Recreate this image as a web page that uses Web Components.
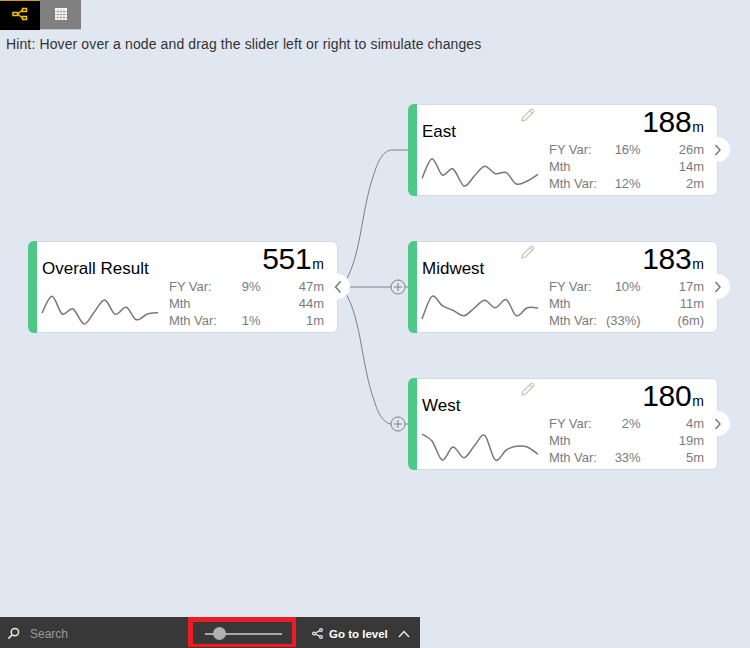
<!DOCTYPE html>
<html>
<head>
<meta charset="utf-8">
<title>Value driver tree</title>
<style>
  html, body { margin: 0; height: 100%; }
  body { background: #e1e7f0; font-family: "Liberation Sans", Arial, sans-serif; overflow: hidden; }
  #page { display: flex; flex-direction: column; height: 648px; }
</style>
</head>
<body>
<div id="page">
  <view-toggle></view-toggle>
  <hint-line>Hint: Hover over a node and drag the slider left or right to simulate changes</hint-line>
  <node-tree>
    <kpi-node slot="root" name="Overall Result" value="551" tab="left"
      points="22,5.3,23,18,33,21,9,23.3,16.3,28.7,23,21.7">
      <kpi-row label="FY Var:" pct="9%" val="47m"></kpi-row>
      <kpi-row label="Mth" val="44m"></kpi-row>
      <kpi-row label="Mth Var:" pct="1%" val="1m"></kpi-row>
    </kpi-node>
    <kpi-node name="East" value="188" tab="right" pencil
      points="24.3,4.7,21,15,32,22,12.3,19.7,18.7,30,27,20.3">
      <kpi-row label="FY Var:" pct="16%" val="26m"></kpi-row>
      <kpi-row label="Mth" val="14m"></kpi-row>
      <kpi-row label="Mth Var:" pct="12%" val="2m"></kpi-row>
    </kpi-node>
    <kpi-node name="Midwest" value="183" tab="right" pencil
      points="28,5.3,14.7,19.3,24.7,17,9.3,16.7,8.7,24.7,16.7,17">
      <kpi-row label="FY Var:" pct="10%" val="17m"></kpi-row>
      <kpi-row label="Mth" val="11m"></kpi-row>
      <kpi-row label="Mth Var:" pct="(33%)" val="(6m)"></kpi-row>
    </kpi-node>
    <kpi-node name="West" value="180" tab="right" pencil
      points="6,13,32,19,29.7,18,7.3,32,22,18.3,19,26.3">
      <kpi-row label="FY Var:" pct="2%" val="4m"></kpi-row>
      <kpi-row label="Mth" val="19m"></kpi-row>
      <kpi-row label="Mth Var:" pct="33%" val="5m"></kpi-row>
    </kpi-node>
  </node-tree>
  <bottom-bar></bottom-bar>
</div>

<script>
  class ViewToggle extends HTMLElement {
    constructor() {
      super();
      this.attachShadow({ mode: "open" });
    }
    connectedCallback() {
      this.shadowRoot.innerHTML = `
        <style>
          :host { display: flex; width: 81px; height: 30px; flex: none; }
          .tree { width: 40px; background: #000; border-top: 1px solid #c9a000; box-sizing: border-box; padding-bottom: 3px;
            display: flex; align-items: center; justify-content: center; }
          .grid { width: 41px; background: #808080; border-bottom: 1px solid #c3c8cf; box-sizing: border-box; padding-bottom: 2px;
            display: flex; align-items: center; justify-content: center; }
        </style>
        <div class="tree">
          <svg width="16" height="14" viewBox="0 0 16 14" fill="none" stroke="#f2c200" stroke-width="1.5">
            <rect x="1" y="5.5" width="4.5" height="3"/>
            <rect x="10.5" y="1.5" width="4" height="3"/>
            <rect x="10.5" y="9.5" width="4" height="3"/>
            <path d="M5.5 7 L10.5 3 M5.5 7 L10.5 11"/>
          </svg>
        </div>
        <div class="grid">
          <svg width="12" height="12" viewBox="0 0 12 12">
            <rect width="12" height="12" fill="#fff"/>
            <path d="M0 3.5H12M0 6.5H12M0 9.5H12M3 1V12M6 1V12M9 1V12" stroke="#b4b4b4" stroke-width="1"/>
          </svg>
        </div>`;
    }
  }

  class HintLine extends HTMLElement {
    constructor() {
      super();
      this.attachShadow({ mode: "open" });
    }
    connectedCallback() {
      this.shadowRoot.innerHTML = `
        <style>
          :host { display: block; flex: none; height: 74px; padding: 6px 0 0 6px; box-sizing: border-box;
            font-size: 14px; line-height: 16px; color: #333; letter-spacing: .12px; }
        </style>
        <slot></slot>`;
    }
  }

  class SparkLine extends HTMLElement {
    constructor() {
      super();
      this.attachShadow({ mode: "open" });
    }
    connectedCallback() {
      const xs = [0, 10, 20.3, 31, 42, 52.3, 62.7, 73.3, 84.3, 94.3, 105.3, 116];
      const ys = this.getAttribute("points").split(",").map(Number);
      const pts = ys.map((y, i) => [xs[i], y]);
      // catmull-rom through the samples
      let d = `M${pts[0][0]} ${pts[0][1]}`;
      for (let i = 0; i < pts.length - 1; i++) {
        const p0 = pts[i - 1] || pts[i];
        const p1 = pts[i];
        const p2 = pts[i + 1];
        const p3 = pts[i + 2] || p2;
        const c1x = p1[0] + (p2[0] - p0[0]) / 6;
        const c1y = p1[1] + (p2[1] - p0[1]) / 6;
        const c2x = p2[0] - (p3[0] - p1[0]) / 6;
        const c2y = p2[1] - (p3[1] - p1[1]) / 6;
        d += ` C${c1x.toFixed(1)} ${c1y.toFixed(1)} ${c2x.toFixed(1)} ${c2y.toFixed(1)} ${p2[0]} ${p2[1]}`;
      }
      this.shadowRoot.innerHTML = `
        <style>
          :host { display: block; width: 116px; height: 36px; flex: none; margin-top: 12px; }
          svg { display: block; overflow: visible; }
        </style>
        <svg width="116" height="36" viewBox="0 0 116 36">
          <path d="${d}" fill="none" stroke="#777" stroke-width="1.5"/>
        </svg>`;
    }
  }

  class KpiRow extends HTMLElement {
    constructor() {
      super();
      this.attachShadow({ mode: "open" });
    }
    connectedCallback() {
      const label = this.getAttribute("label") || "";
      const pct = this.getAttribute("pct") || "";
      const val = this.getAttribute("val") || "";
      this.shadowRoot.innerHTML = `
        <style>
          :host { display: grid; grid-template-columns: 50px 41.5px 63.5px; height: 17px;
            font-size: 13px; line-height: 17px; color: #7b7b7b; white-space: nowrap; letter-spacing: -.05px; }
          .n { text-align: right; }
        </style>
        <span>${label}</span><span class="n">${pct}</span><span class="n">${val}</span>`;
    }
  }

  class KpiNode extends HTMLElement {
    constructor() {
      super();
      this.attachShadow({ mode: "open" });
    }
    connectedCallback() {
      const name = this.getAttribute("name");
      const value = this.getAttribute("value");
      const tab = this.getAttribute("tab");
      const chevron = tab === "left" ? "M8.5 1.5 L3.5 7 L8.5 12.5" : "M3.5 2 L8 7 L3.5 12";
      const pencil = this.hasAttribute("pencil") ? `
        <svg class="pencil" width="14" height="14" viewBox="0 0 14 14" fill="#fff" stroke="#c8c8c0" stroke-width="1.3">
          <path d="M1 13 L1.8 9.6 L9.8 1.6 Q10.6 .9 11.4 1.6 L12.4 2.6 Q13.1 3.4 12.4 4.2 L4.4 12.2 Z"/>
          <path d="M8.6 2.8 L11.2 5.4" fill="none"/>
        </svg>` : "";
      this.shadowRoot.innerHTML = `
        <style>
          :host { display: flex; position: relative; width: 310px; height: 92px; box-sizing: border-box;
            background: #fff; border-radius: 6px; border: 1px solid #d5dae3; border-left: 0; }
          .bar { width: 9px; flex: none; margin: -1px 0; background: #4dc886; border-radius: 6px 0 0 6px; }
          .body { flex: 1; display: flex; flex-direction: column; padding: 0 13px 0 5px; color: #000; }
          .head { display: flex; justify-content: space-between; height: 37px; flex: none; }
          .name { font-size: 17px; line-height: 20px; margin-top: 17px; }
          .num { display: flex; align-items: baseline; margin-top: 0; line-height: 34px; height: 34px; }
          .num b { font-weight: normal; font-size: 30px; letter-spacing: -.3px; }
          .num i { font-style: normal; font-size: 14px; margin-left: 1px; }
          .low { display: flex; justify-content: space-between; }
          .rows { width: 155px; margin-top: -1px; }
          .pencil { position: absolute; left: 113px; top: 3px; }
          .tab { position: absolute; right: -13px; top: 32px; width: 25px; height: 25px; border-radius: 50%;
            background: #fff; display: flex; align-items: center; justify-content: center; }
        </style>
        <div class="bar"></div>
        <div class="body">
          <div class="head">
            <div class="name">${name}</div>
            <div class="num"><b>${value}</b><i>m</i></div>
          </div>
          <div class="low">
            <spark-line points="${this.getAttribute("points")}"></spark-line>
            <div class="rows"><slot></slot></div>
          </div>
        </div>
        ${pencil}
        <div class="tab">
          <svg width="12" height="14" viewBox="0 0 12 14" fill="none" stroke="#757575" stroke-width="1.4"><path d="${chevron}"/></svg>
        </div>`;
    }
  }

  class NodeTree extends HTMLElement {
    constructor() {
      super();
      this.attachShadow({ mode: "open" });
    }
    connectedCallback() {
      const plus = (x, y) => `
        <circle cx="${x}" cy="${y}" r="7" fill="#e1e7f0" stroke="#808080"/>
        <path d="M${x - 4} ${y}H${x + 4}M${x} ${y - 4}V${y + 4}" stroke="#808080"/>`;
      this.shadowRoot.innerHTML = `
        <style>
          :host { display: flex; flex: 1; position: relative; align-items: flex-start; padding-left: 28px; gap: 70px; }
          .root { margin-top: 137px; }
          .kids { display: flex; flex-direction: column; gap: 45px; }
          svg.links { position: absolute; left: 0; top: 0; }
          .root, .kids { position: relative; z-index: 1; }
        </style>
        <svg class="links" width="750" height="440" viewBox="0 104 750 440" fill="none" stroke="#808080">
          <path d="M346 280 C352 270 356 256 360 236 C364 214 368 190 374 174 C378 160 384 150 392 150 L408 150"/>
          <path d="M346 294 C352 304 356 318 360 338 C364 360 368 384 374 400 C378 414 384 424 392 424 L408 424"/>
          <path d="M350 287 H408"/>
          ${plus(398, 287)}
          ${plus(398, 424)}
        </svg>
        <div class="root"><slot name="root"></slot></div>
        <div class="kids"><slot></slot></div>`;
    }
  }

  class BottomBar extends HTMLElement {
    constructor() {
      super();
      this.attachShadow({ mode: "open" });
    }
    connectedCallback() {
      this.shadowRoot.innerHTML = `
        <style>
          :host { display: flex; align-items: center; width: 420px; height: 31px; flex: none; box-sizing: border-box;
            background: #383838; color: #fff; font-size: 12px; padding: 2px 0 0 7px; }
          .find { display: flex; align-items: center; gap: 10px; width: 181px; color: #9a9a9a; }
          .find svg, .level svg { display: block; }
          .slider { box-sizing: border-box; width: 108px; height: 30px; align-self: flex-start; margin-top: -2px;
            border: solid #ed1c24; border-width: 5px 4px 3px 5px; display: flex; align-items: center;
            padding: 2px 0 0 12px; }
          .track { position: relative; width: 77px; height: 2px; background: #a8a8a8; }
          .thumb { position: absolute; left: 8px; top: -6px; width: 13px; height: 13px; border-radius: 50%; background: #b0b0b0; }
          .level { display: flex; align-items: center; margin-left: 16px; font-weight: bold; font-size: 11.5px; }
          .level span { margin: 0 10px 0 6px; }
        </style>
        <div class="find">
          <svg width="13" height="13" viewBox="0 0 14 14" fill="none" stroke="#e8e8e8" stroke-width="1.6">
            <circle cx="8.5" cy="5.5" r="4"/><path d="M5.5 8.5 L1.5 12.5"/>
          </svg>
          <span>Search</span>
        </div>
        <div class="slider"><div class="track"><div class="thumb"></div></div></div>
        <div class="level">
          <svg width="11" height="11" viewBox="0 0 11 11" fill="none" stroke="#e8e8e8" stroke-width="1.2">
            <circle cx="2" cy="5.5" r="1.4"/><circle cx="9" cy="2" r="1.4"/><circle cx="9" cy="9" r="1.4"/>
            <path d="M3.4 5 L7.8 2.6 M3.4 6 L7.8 8.4"/>
          </svg>
          <span>Go to level</span>
          <svg width="12" height="8" viewBox="0 0 12 8" fill="none" stroke="#e8e8e8" stroke-width="1.4"><path d="M1 7 L6 1.5 L11 7"/></svg>
        </div>`;
    }
  }

  customElements.define("view-toggle", ViewToggle);
  customElements.define("hint-line", HintLine);
  customElements.define("spark-line", SparkLine);
  customElements.define("kpi-row", KpiRow);
  customElements.define("kpi-node", KpiNode);
  customElements.define("node-tree", NodeTree);
  customElements.define("bottom-bar", BottomBar);
</script>
</body>
</html>
